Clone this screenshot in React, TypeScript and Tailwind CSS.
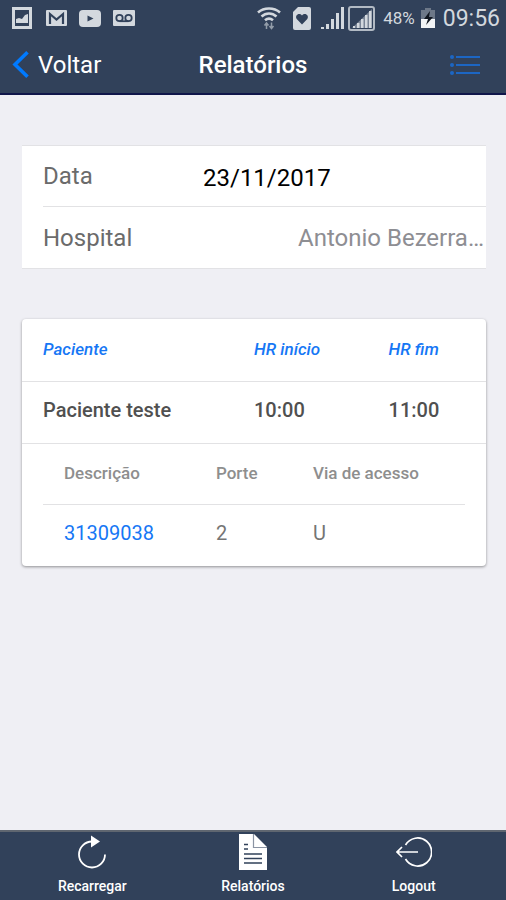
import type { ReactNode } from "react";

const procedures = [{ code: "31309038", size: "2", access: "U" }];

function StatusBar() {
  return (
    <div className="flex h-9 items-center justify-between pl-3 pr-1.5 text-[#d3d8de]">
      <div className="flex items-center gap-3">
        {/* Gallery */}
        <svg width="20" height="22" viewBox="0 0 20 22" fill="none">
          <path d="M1.5 1.5h17v19h-17z" stroke="currentColor" strokeWidth="3" />
          <path d="M4 16v-4l3-1 3 1 3-4 3-1v9z" fill="currentColor" />
        </svg>
        {/* Mail */}
        <svg width="21" height="16" viewBox="0 0 21 16" className="ml-0.5">
          <rect width="21" height="16" rx="1" fill="currentColor" />
          <path d="M4 14V4l6.500 5.500L17 4v10" fill="none" stroke="#31415a" strokeWidth="2.200" />
        </svg>
        {/* Video */}
        <svg width="22" height="17" viewBox="0 0 22 17">
          <rect width="22" height="17" rx="4" fill="currentColor" />
          <path d="M8.500 5.500l6 3-6 3z" fill="#31415a" />
        </svg>
        {/* Voicemail */}
        <svg width="22" height="16" viewBox="0 0 22 16">
          <rect width="22" height="16" rx="1" fill="currentColor" />
          <g fill="none" stroke="#31415a" strokeWidth="1.8">
            <circle cx="6.5" cy="8" r="3.2" />
            <circle cx="15.5" cy="8" r="3.2" />
            <path d="M6.5 11.2h9" />
          </g>
        </svg>
      </div>
      <div className="flex items-center">
        {/* Wifi */}
        <svg width="24" height="24" viewBox="0 0 24 24" fill="none" stroke="currentColor" strokeWidth="2.6">
          <path d="M1 6.5c6-5.3 16-5.3 22 0M4.500 10.500c4.400-4 10.600-4 15 0M8 14.300c2.500-2.200 5.500-2.200 8 0" />
          <path d="M9.500 23v-6M7.500 19.500l2-2.500 2 2.500M14.500 16.500v6M12.500 20l2 2.500 2-2.500" strokeWidth="1.500" opacity="0.600" />
        </svg>
        {/* Sim card */}
        <svg width="18" height="23" viewBox="0 0 18 23" className="ml-3">
          <path d="M5 0h11a2 2 0 0 1 2 2v19a2 2 0 0 1-2 2H2a2 2 0 0 1-2-2V5z" fill="currentColor" />
          <path d="M9 17.500L3.700 12C1.500 8.500 6 5 9 8.500c3-3.500 7.500 0 5.300 3.500z" fill="#31415a" />
        </svg>
        {/* Signal */}
        <svg width="23" height="23" viewBox="0 0 23 23" fill="currentColor" className="ml-2.5">
          <path d="M0 20h3v2H0zM5 17h3v5H5zM10 12h3v10h-3zM15 6h3v16h-3zM20 0h3v22h-3z" />
        </svg>
        {/* Second signal */}
        <svg width="27" height="25" viewBox="0 0 27 25" fill="currentColor" className="ml-1">
          <rect x="1" y="1" width="25" height="23" rx="2" fill="none" stroke="currentColor" strokeWidth="2" opacity="0.800" />
          <path d="M4 22L24 3v19z" opacity="0.450" />
          <path d="M5 20h2v2H5zM9 17h2.500v5H9zM13 13h2.500v9H13zM17 9h2.500v13H17zM21 5h2.500v17H21z" />
        </svg>
        <span className="ml-2 text-[17px] leading-none">48%</span>
        {/* Battery */}
        <svg width="14" height="20" viewBox="0 0 14 20" className="ml-1.5">
          <path d="M4 0h6v2h4v18H0V2h4z" fill="#6d7888" />
          <path d="M0 11h14v9H0z" fill="#f2f4f6" />
          <path d="M9 3L3 11h4l-2 6 7-8H8z" fill="#10161f" />
        </svg>
        <span className="ml-2 text-[23px] leading-none">09:56</span>
      </div>
    </div>
  );
}

function NavBar() {
  return (
    <div className="grid h-[57px] grid-cols-[1fr_auto_1fr] items-center px-3 text-[24px] leading-8 text-white">
      <a href="#voltar" className="flex items-center gap-2 justify-self-start">
        <svg width="18" height="27" viewBox="0 0 18 27" fill="none" stroke="#007aff" strokeWidth="3.600">
          <path d="M15.500 1.300L3 13.500l12.500 12.200" />
        </svg>
        Voltar
      </a>
      <h1 className="font-medium">Relatórios</h1>
      <button type="button" aria-label="Menu" className="mr-3.5 justify-self-end">
        <svg width="30" height="20" viewBox="0 0 30 20" fill="#1c66c4">
          <circle cx="2" cy="2" r="2" />
          <circle cx="2" cy="10" r="2" />
          <circle cx="2" cy="18" r="2" />
          <path d="M6 1h24v2H6zM6 9h24v2H6zM6 17h24v2H6z" />
        </svg>
      </button>
    </div>
  );
}

function FilterForm() {
  return (
    <form className="border-y border-[#e2e2e5] bg-white pl-[21px] text-[24px] text-[#6b6b6b]">
      <div className="flex h-[61px] items-center border-b border-[#e2e2e4]">
        <label htmlFor="data" className="w-40 shrink-0">
          Data
        </label>
        <input
          id="data"
          type="text"
          defaultValue="23/11/2017"
          className="min-w-0 flex-1 pt-1 text-black outline-none"
        />
      </div>
      <div className="flex h-[61px] items-center justify-between">
        <label htmlFor="hospital">Hospital</label>
        <select id="hospital" className="appearance-none bg-transparent pr-0.5 text-[#8e8e93] outline-none">
          <option>Antonio Bezerra…</option>
        </select>
      </div>
    </form>
  );
}

function ReportCard() {
  return (
    <section className="rounded-sm bg-white shadow-[0_1px_3px_rgba(0,0,0,0.4)]">
      <table className="w-full table-fixed text-left">
        <thead>
          <tr className="h-[62px] border-b border-[#e2e2e4] text-[17px] italic text-[#1677f5]">
            <th className="w-[211px] pl-[21px] font-medium">Paciente</th>
            <th className="w-[29%] pl-[21px] font-medium">HR início</th>
            <th className="pl-[21px] font-medium">HR fim</th>
          </tr>
        </thead>
        <tbody>
          <tr className="h-[62px] border-b border-[#e2e2e4] text-[20px] font-medium text-[#505050]">
            <td className="pb-1 pl-[21px]">Paciente teste</td>
            <td className="pb-1 pl-[21px]">10:00</td>
            <td className="pb-1 pl-[21px]">11:00</td>
          </tr>
        </tbody>
      </table>
      <div className="px-[21px]">
        <table className="w-full table-fixed text-left">
          <thead>
            <tr className="h-[61px] border-b border-[#e2e2e4] text-[17px] text-[#8e8e8e]">
              <th className="w-[36%] pl-[21px] font-medium">Descrição</th>
              <th className="w-[23%] pl-[21px] font-medium">Porte</th>
              <th className="pl-[21px] font-medium">Via de acesso</th>
            </tr>
          </thead>
          <tbody>
            {procedures.map((item) => (
              <tr key={item.code} className="h-[61px] text-[20px] text-[#757575]">
                <td className="pb-1 pl-[21px]">
                  <a href="#procedimento" className="text-[#1677f5]">
                    {item.code}
                  </a>
                </td>
                <td className="pb-1 pl-[21px]">{item.size}</td>
                <td className="pb-1 pl-[21px]">{item.access}</td>
              </tr>
            ))}
          </tbody>
        </table>
      </div>
    </section>
  );
}

function Tab({ label, children }: { label: string; children: ReactNode }) {
  return (
    <a href={`#${label}`} className="flex flex-1 flex-col items-center gap-1">
      <span className="flex h-10 items-center">{children}</span>
      <span className="text-[14px] font-medium leading-5">{label}</span>
    </a>
  );
}

function TabBar() {
  return (
    <nav className="flex h-[70px] border-t-2 border-[#5f6670] bg-[#31415a] px-3 text-white">
      <Tab label="Recarregar">
        <svg width="30" height="34" viewBox="0 0 30 34" fill="none">
          <path d="M18 6.500H15a13 13 0 1 0 13 13" stroke="currentColor" strokeWidth="1.800" />
          <path d="M14 0.500l9 6-9 6z" fill="currentColor" />
        </svg>
      </Tab>
      <Tab label="Relatórios">
        <svg width="28" height="36" viewBox="0 0 28 36">
          <path d="M0 0h15l13 13v23H0z" fill="currentColor" />
          <path d="M14.500 0v13.500H28" fill="none" stroke="#8b94a3" strokeWidth="1.200" />
          <path d="M5 10.500h4M5 15h4M5 20h18M5 24.500h18M5 29h18" stroke="#31415a" strokeWidth="1.600" />
        </svg>
      </Tab>
      <Tab label="Logout">
        <svg width="36" height="30" viewBox="0 0 36 30" fill="none" stroke="currentColor" strokeWidth="1.700">
          <path d="M9.500 8a14 14 0 1 1 0 14M1 15h21M6 10l-5 5 5 5" />
        </svg>
      </Tab>
    </nav>
  );
}

export default function App() {
  return (
    <div className="flex min-h-screen flex-col bg-[#efeff4] font-['Roboto',sans-serif]">
      <header className="border-b-2 border-[#10164a] bg-[#31415a]">
        <StatusBar />
        <NavBar />
      </header>
      <main className="flex flex-1 flex-col gap-[50px] px-5 pt-[50px] pl-[22px]">
        <FilterForm />
        <ReportCard />
      </main>
      <TabBar />
    </div>
  );
}
